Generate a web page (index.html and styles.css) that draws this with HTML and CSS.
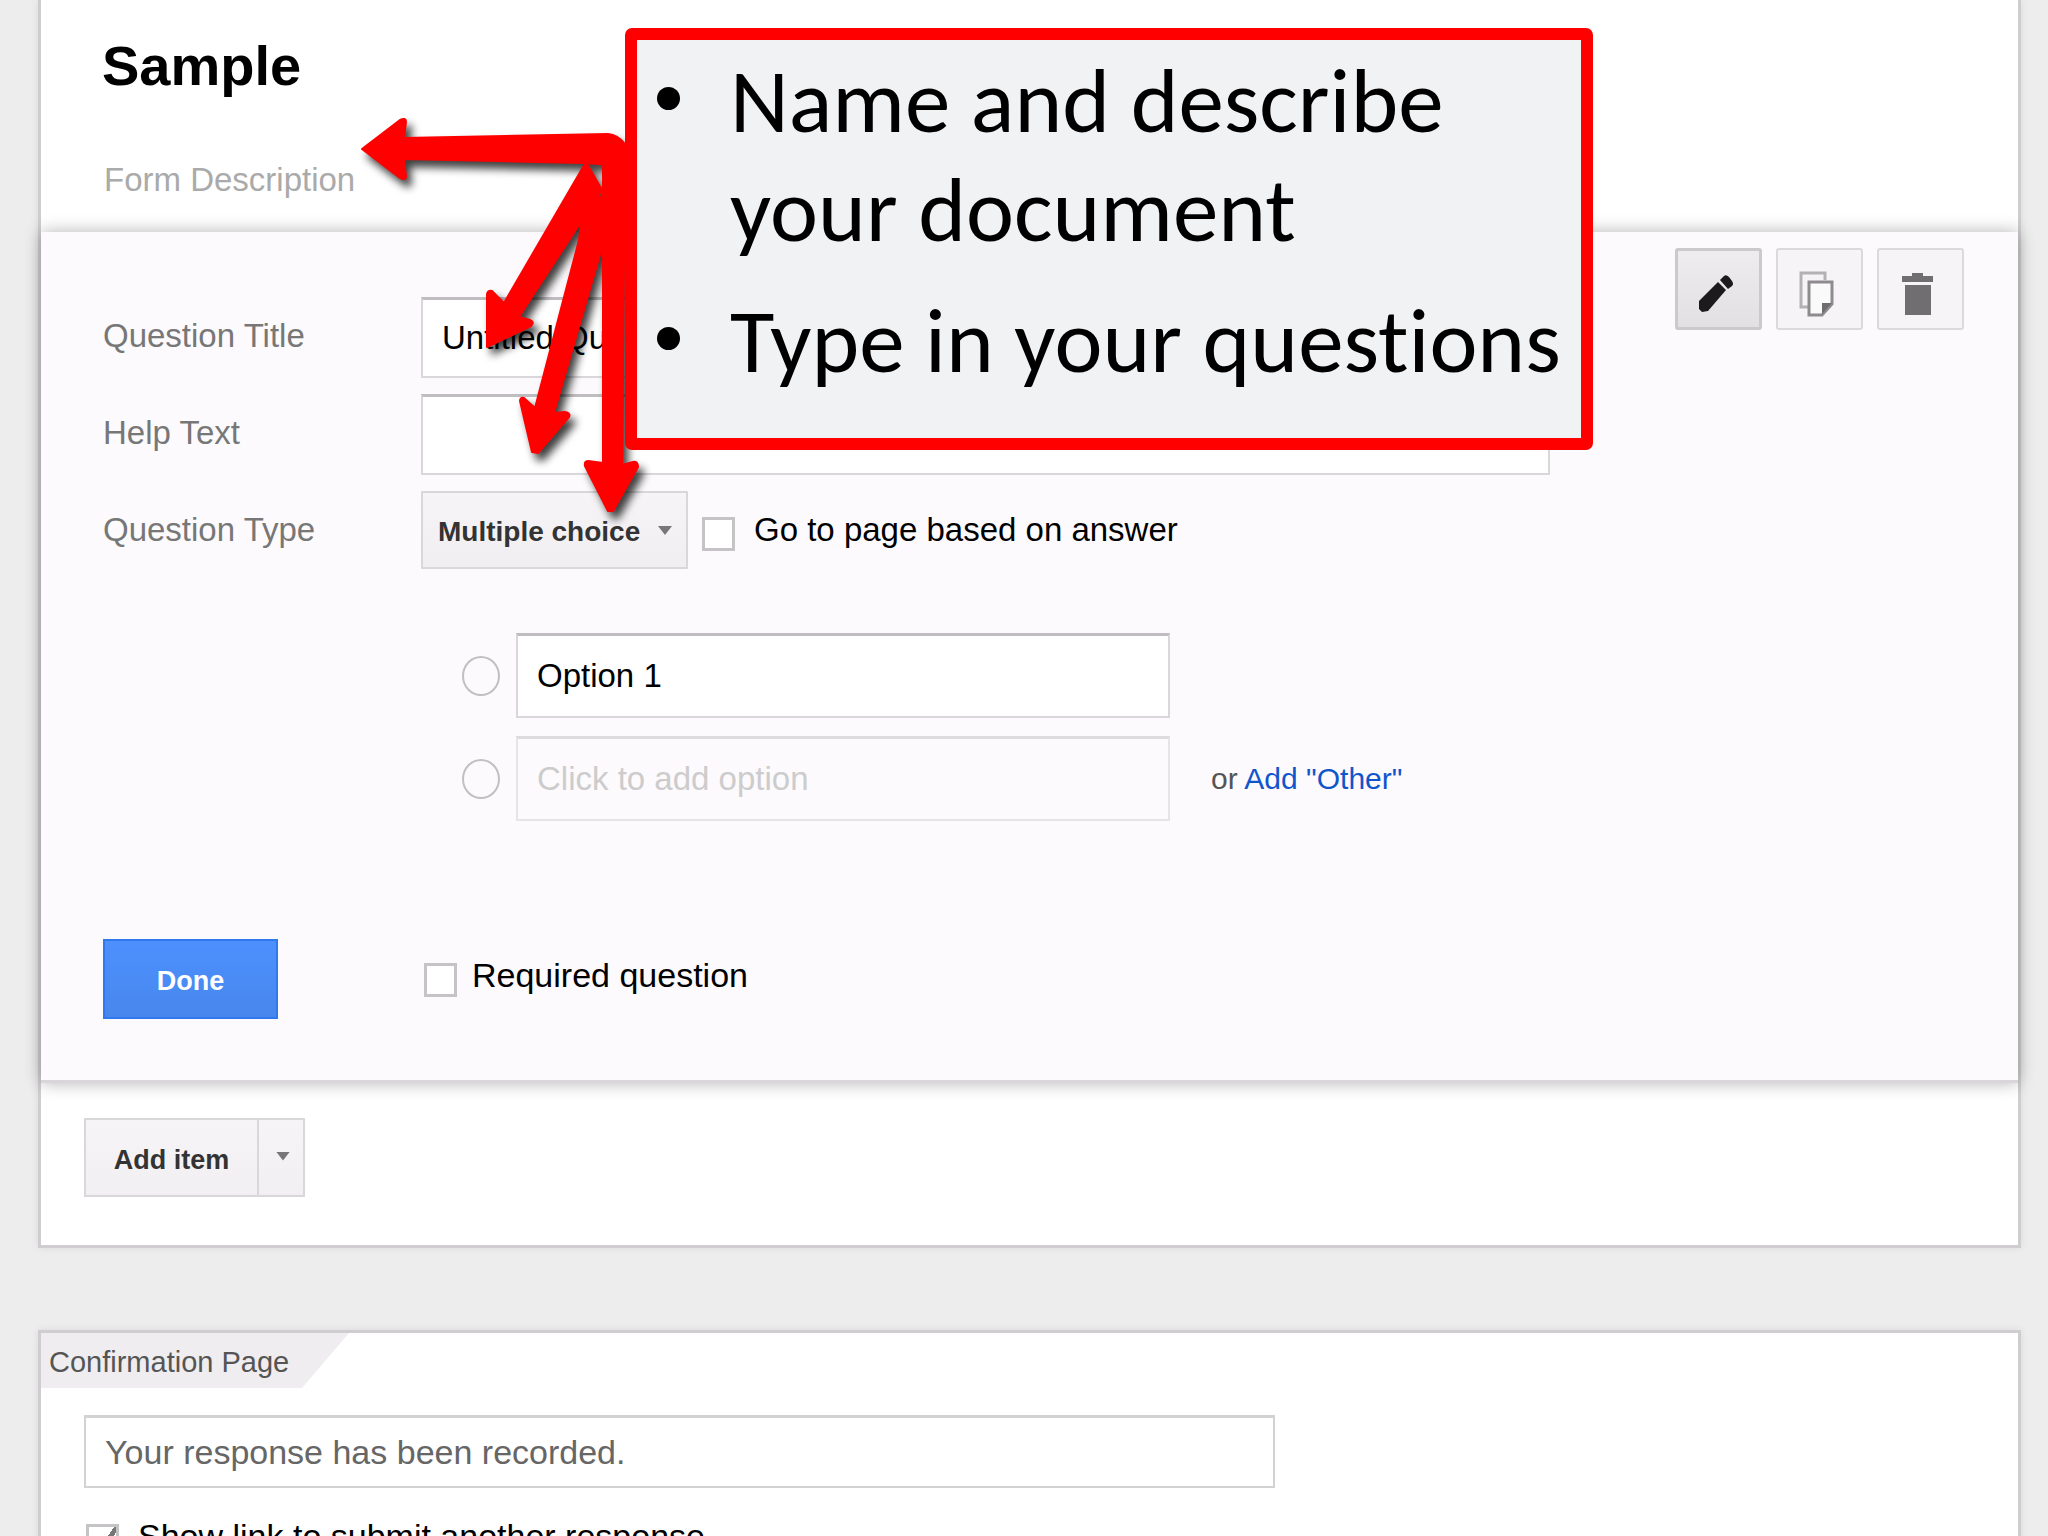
FILE: index.html
```html
<!DOCTYPE html>
<html lang="en">
<head>
<meta charset="utf-8">
<meta name="viewport" content="width=device-width, initial-scale=1">
<title>Sample</title>
<link rel="stylesheet" href="styles.css">
</head>
<body>
<main class="page">
  <form class="card form-card">
    <header class="form-head">
      <h1 class="form-title">Sample</h1>
      <p class="form-description">Form Description</p>
    </header>

    <section class="editor">
      <div class="toolbar">
        <button type="button" class="tool tool-active" aria-label="Edit">
          <svg viewBox="0 0 36 40" width="36" height="40"><path d="M1 27 20 8 28 16 10 37 4 38 1 35Z" fill="#1c1a1c"/><path d="M22 6 26 2Q28 0 31 3L34 7Q36 10 34 12L30 15Z" fill="#1c1a1c"/></svg>
        </button>
        <button type="button" class="tool" aria-label="Duplicate">
          <svg viewBox="0 0 36 46" width="36" height="46" fill="none" stroke-width="3"><path d="M9 36H2V2H26V9" stroke="#b3b1b3"/><path d="M10 11H33V33L23 44H10Z" fill="#fbfafb" stroke="#8d8b8d"/><path d="M33 32H23V43Z" fill="#6f6d6f"/></svg>
        </button>
        <button type="button" class="tool" aria-label="Delete">
          <svg viewBox="0 0 32 44" width="32" height="44" fill="#706e70"><path d="M0 4H10V1H21V4H31V10H0ZM3 13H29V43H3Z"/></svg>
        </button>
      </div>

      <div class="fields">
        <label class="label" for="title">Question Title</label>
        <input class="text" id="title" type="text" value="Untitled Question">

        <label class="label" for="help">Help Text</label>
        <input class="text" id="help" type="text">

        <label class="label" for="type">Question Type</label>
        <div class="type-row">
          <div class="select-wrap">
            <select class="select" id="type"><option>Multiple choice</option></select>
            <span class="caret"></span>
          </div>
          <input class="check" id="goto" type="checkbox">
          <label class="check-label" for="goto">Go to page based on answer</label>
        </div>
      </div>

      <div class="options">
        <div class="option">
          <input class="radio" type="radio" name="opt" aria-label="Option 1">
          <input class="text option-text" type="text" value="Option 1" aria-label="Option 1 text">
        </div>
        <div class="option">
          <input class="radio" type="radio" name="opt" aria-label="New option">
          <input class="text option-text option-new" type="text" placeholder="Click to add option" aria-label="New option text">
          <span class="other">or <a class="link" href="#other">Add "Other"</a></span>
        </div>
      </div>

      <div class="finish">
        <div><button type="button" class="done">Done</button></div>
        <div class="required">
          <input class="check" id="required" type="checkbox">
          <label class="check-label" for="required">Required question</label>
        </div>
      </div>
    </section>

    <div class="add-row">
      <button type="button" class="add">Add item</button>
      <button type="button" class="add add-more" aria-label="More item types"><span class="caret-shape"></span></button>
    </div>
  </form>

  <section class="card confirm-card">
    <h2 class="tab">Confirmation Page</h2>
    <div class="confirm-body">
      <input class="text confirm-text" type="text" value="Your response has been recorded." aria-label="Confirmation message">
      <div class="confirm-check">
        <input class="check" id="again" type="checkbox" checked>
        <label class="check-label" for="again">Show link to submit another response</label>
      </div>
    </div>
  </section>

  <svg class="arrows" viewBox="0 0 320 440" width="320" height="440" aria-hidden="true">
    <g fill="#f00" stroke="#f00" stroke-width="2" stroke-linejoin="round">
      <path d="M22 49 60 20Q66 17 66 22L64 38 268 34Q278 35 285 44V66L244 63 64 59 66 77Q65 81 60 78Z"/>
      <path d="M246 62 164 203 152 191Q148 190 147 194L147 247 191 226Q195 222 190 220L179 217 262 90Z"/>
      <path d="M248 70 239 140 195 308 184 298Q180 297 180 301L192 352 198 353 229 317Q231 313 225 312L214 313 270 120Z"/>
      <path d="M263 60V363L248 361Q244 361 245 366L268 411H273L298 367Q298 361 293 362L282 365 285 60Z"/>
    </g>
  </svg>

  <aside class="callout">
    <ul class="callout-list">
      <li>Name and describe your document</li>
      <li>Type in your questions</li>
    </ul>
  </aside>
</main>
</body>
</html>
```
FILE: styles.css
```css
* { box-sizing: border-box; }

html { scrollbar-width: none; }

body {
  margin: 0;
  background: #eeedee;
  color: #000;
  font-family: "Liberation Sans", Arial, sans-serif;
  font-size: 33px;
  line-height: 40px;
}

input, select, button { font: inherit; margin: 0; }

.page {
  position: relative;
  padding: 0 27px 0 38px;
}

.card {
  background: #fff;
  border: 3px solid #cfcdcf;
  box-shadow: 0 0 8px rgba(0, 0, 0, .08);
}

.form-card {
  border-top: 0;
  padding-bottom: 48px;
}

.form-head {
  height: 232px;
  padding: 32px 62px 0 61px;
}

.form-title {
  margin: 0;
  font-size: 56px;
  line-height: 68px;
}

.form-description {
  margin: 60px 2px 0;
  color: #aaa;
}

/* The question being edited is raised above the card */
.editor {
  height: 851px;
  padding: 16px 54px 0 62px;
  background: #fcfafc;
  border-bottom: 3px solid #d8d6d9;
  box-shadow: 0 0 16px rgba(0, 0, 0, .3);
}

.toolbar {
  display: flex;
  justify-content: flex-end;
  gap: 14px;
  height: 49px;
}

.tool {
  display: grid;
  place-items: center;
  width: 87px;
  height: 82px;
  padding: 10px 5px 0 0;
  background: #f6f4f6;
  border: 2px solid #dbd9dc;
  border-radius: 3px;
}

.tool-active {
  background: linear-gradient(#eeecee, #e2e0e2);
  border: 3px solid #cbc9cb;
}

.fields {
  display: grid;
  grid-template-columns: 318px minmax(0, 1129px);
  row-gap: 16px;
}

.label {
  color: #777;
  line-height: 78px;
}

.text {
  width: 100%;
  height: 81px;
  padding: 0 19px;
  background: #fff;
  border: 2px solid #d9d7da;
  border-top: 3px solid #bfbdbf;
  border-radius: 0;
  outline: 0;
}

.type-row {
  display: flex;
  align-items: center;
  height: 78px;
}

.select-wrap { position: relative; }

.select {
  appearance: none;
  width: 267px;
  height: 78px;
  padding: 4px 0 0 15px;
  background: linear-gradient(#f6f4f6, #f0eef0);
  border: 2px solid #d9d7da;
  border-radius: 1px;
  color: #333;
  font-size: 28px;
  font-weight: bold;
}

.caret {
  position: absolute;
  right: 16px;
  top: 35px;
}

.caret,
.caret-shape {
  width: 14px;
  height: 9px;
  background: #777;
  clip-path: polygon(0 0, 100% 0, 50% 100%);
}

.caret-shape { display: block; }

.check {
  appearance: none;
  flex: none;
  width: 33px;
  height: 34px;
  background: #fff;
  border: 3px solid #c5c3c6;
}

.check-label { font-size: 34px; }

.type-row .check { margin: 8px 19px 0 14px; }

.type-row .check-label { font-size: 33px; }

.options {
  display: grid;
  gap: 18px;
  padding: 64px 0 0 359px;
}

.option {
  display: flex;
  align-items: center;
}

.radio {
  appearance: none;
  flex: none;
  width: 38px;
  height: 40px;
  margin-right: 16px;
  border: 2px solid #c1bfc1;
  border-radius: 50%;
}

.option-text {
  width: 654px;
  height: 85px;
}

.option-new {
  background: #fcfafc;
  border-color: #e6e4e7;
  border-top-color: #dddbde;
}

.option-new::placeholder {
  color: #ccc;
  opacity: 1;
}

.other {
  margin-left: 41px;
  color: #555;
  font-size: 30px;
}

.link {
  color: #15c;
  text-decoration: none;
}

.finish {
  display: grid;
  grid-template-columns: 321px 1fr;
  margin-top: 118px;
}

.done {
  width: 175px;
  height: 80px;
  padding: 4px 0 0;
  background: linear-gradient(#4d90fe, #4787ed);
  border: 2px solid #3079ed;
  color: #fff;
  font-size: 27px;
  font-weight: bold;
}

.required {
  display: flex;
  gap: 15px;
  padding-top: 16px;
}

.required .check { margin-top: 8px; }

.add-row {
  display: flex;
  padding: 35px 43px 0;
}

.add {
  width: 175px;
  height: 79px;
  padding: 4px 0 0;
  background: linear-gradient(#f6f4f6, #f1eff1);
  border: 2px solid #d9d7da;
  color: #333;
  font-size: 27px;
  font-weight: bold;
}

.add-more {
  display: grid;
  place-items: center;
  width: 46px;
  padding: 0 0 3px 4px;
  border-left: 0;
}

.confirm-card {
  margin-top: 82px;
  padding-bottom: 60px;
}

.tab {
  width: 308px;
  margin: 0;
  padding: 3px 0 0 8px;
  background: #efedef;
  clip-path: polygon(0 0, 100% 0, 261px 100%, 0 100%);
  color: #555;
  font-size: 29px;
  font-weight: normal;
  line-height: 52px;
}

.confirm-body { padding: 27px 43px 0; }

.confirm-text {
  display: block;
  max-width: 1191px;
  height: 73px;
  border-color: #d3d1d4;
  color: #666;
  font-size: 34px;
}

.confirm-check {
  display: flex;
  gap: 19px;
  padding: 28px 2px 0;
}

.confirm-check .check { margin-top: 8px; }

.confirm-check .check:checked {
  background: linear-gradient(125deg, #fff 54%, #777 54%, #777 66%, #fff 66%);
}

/* Annotation laid over the form */
.arrows {
  position: absolute;
  left: 340px;
  top: 100px;
  filter: drop-shadow(5px 7px 4px rgba(0, 0, 0, .75));
}

.callout {
  position: absolute;
  left: 625px;
  top: 28px;
  width: 968px;
  height: 422px;
  padding: 6px 0 0 20px;
  background: #f1f2f4;
  border: 12px solid #f00;
  border-radius: 7px;
}

.callout-list {
  display: grid;
  gap: 22px;
  margin: 0;
  padding: 0;
  list-style: none;
  font-family: Carlito, Lato, sans-serif;
  font-size: 91px;
  font-variant-ligatures: none;
  line-height: 109px;
}

.callout-list li {
  display: grid;
  grid-template-columns: 73px 1fr;
}

.callout-list li::before {
  content: "";
  width: 23px;
  height: 23px;
  margin-top: 41px;
  background: #000;
  border-radius: 50%;
}
```
